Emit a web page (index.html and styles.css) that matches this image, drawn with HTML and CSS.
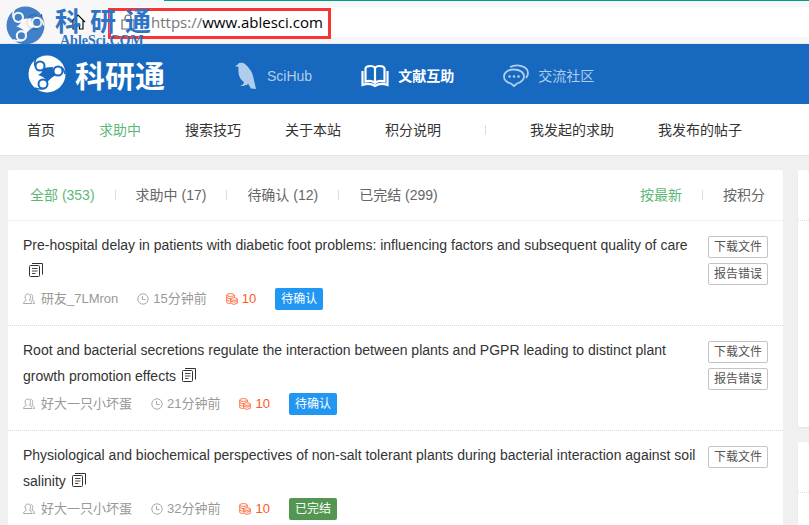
FILE: index.html
```html
<!DOCTYPE html>
<html lang="zh-CN">
<head>
<meta charset="utf-8">
<title>科研通 - 文献互助</title>
<link rel="stylesheet" href="styles.css">
</head>
<body>
<svg class="defs" aria-hidden="true">
  <symbol id="logo" viewBox="0 0 38 38">
    <circle cx="19" cy="19" r="18.500" fill="currentColor"/>
    <g fill="var(--gap)">
      <path d="M15 13Q21 12 25 12Q24 17 28 20Q22 23 19 28Q18 22 10 20Q15 18 15 13Z"/>
      <circle cx="12" cy="11" r="5.500"/><circle cx="30" cy="16" r="5.500"/><circle cx="15" cy="29" r="5.500"/>
    </g>
    <g fill="none" stroke="var(--gap)" stroke-width="1.600">
      <path d="M7 11Q6 6 9 2"/>
      <path d="M33 12Q36 14 37 19"/>
      <path d="M17 33Q12 35 7 33"/>
    </g>
    <g fill="currentColor">
      <circle cx="12" cy="11" r="3.500"/><circle cx="30" cy="16" r="3.500"/><circle cx="15" cy="29" r="3.500"/>
    </g>
  </symbol>
  <symbol id="doc" viewBox="0 0 14 14">
    <path d="M3 .5H13.500V11.500" fill="none" stroke="currentColor"/>
    <rect x=".5" y="2.500" width="10" height="11" rx="1" fill="none" stroke="currentColor"/>
    <path d="M3 5.500H8.500M3 8H8.500M3 10.500H6.500" stroke="currentColor" stroke-width=".9"/>
  </symbol>
  <symbol id="user" viewBox="0 0 12 12">
    <path d="M.5 10.500C.7 8.500 2 8 3.300 7.300C1.200 4.500 2 1 4.800 1S8.400 4.500 6.300 7.300C8 8 9 8.500 9 10.500ZM7.500 1.200C10 1.500 10.500 4.500 8.800 7C10.500 7.500 11.500 8.500 11.500 10.500H10" fill="none" stroke="currentColor"/>
  </symbol>
  <symbol id="clock" viewBox="0 0 12 12">
    <circle cx="6" cy="6" r="5.200" fill="none" stroke="currentColor"/>
    <path d="M5.500 3V6.500H8.500" fill="none" stroke="currentColor"/>
  </symbol>
  <symbol id="coin" viewBox="0 0 12 12">
    <g fill="none" stroke="currentColor" stroke-width=".8">
      <ellipse cx="4.500" cy="2" rx="3.800" ry="1.400"/>
      <path d="M.7 2V9.500Q2 10.500 4 10.500M.7 4.500Q3 6 5 5.500M.7 7Q2.500 8.200 4.500 8M8.300 2V4"/>
      <ellipse cx="8" cy="6" rx="3.300" ry="1.300"/>
      <path d="M4.700 6V10.300Q8 12.500 11.300 10.300V6M4.700 8.200Q8 10.200 11.300 8.200"/>
    </g>
  </symbol>
</svg>

<div class="browser">
  <div class="tabline"></div>
  <svg class="tool" viewBox="0 0 18 18" aria-hidden="true"><path d="M12 2.500A7.300 7.300 0 1 0 16.300 8M11.500 6.500H16.500V1.500" fill="none" stroke="#111" stroke-width="1.200"/></svg>
  <svg class="tool" viewBox="0 0 18 18" aria-hidden="true"><path d="M2 9L9 2L16 9M4 7.500V16H7.500V11H10.500V16H14V7.500" fill="none" stroke="#111" stroke-width="1.200"/></svg>
  <div class="address">
    <svg class="lock" viewBox="0 0 14 16" aria-hidden="true"><path d="M1 6H13V15H1ZM4 6V4A3 3 0 0 1 10 4V6" fill="none" stroke="#666" stroke-width="1.200"/></svg>
    <div class="url"><span>https://</span>www.ablesci.com</div>
  </div>
  <div class="redbox"></div>
  <div class="watermark">
    <svg class="mark" aria-hidden="true"><use href="#logo"/></svg>
    <div class="words"><div class="zh"><span>科</span><span>研</span><span>通</span></div><div class="en">AbleSci.COM</div></div>
  </div>
</div>

<header class="header">
  <a class="brand" href="#"><svg class="mark" aria-hidden="true"><use href="#logo"/></svg><span>科研通</span></a>
  <nav class="sections">
    <a href="#"><svg width="24" height="28" viewBox="0 0 24 28" aria-hidden="true"><path d="M1 4Q4 3 5 1Q9 0 11 2C15 6 18 9 19 14L22 27L17 26.500L14 21.500L13 23H10L11 24H6L9 22.500L10 20C5 17 4 11 4.500 5Z" fill="currentColor"/></svg><span>SciHub</span></a>
    <a class="active" href="#"><svg width="28" height="24" viewBox="0 0 28 24" aria-hidden="true"><path d="M14 4Q13 2 9.500 2Q5 2 4.500 4.500V17.500Q11 15.500 14 19Q17 15.500 23.500 17.500V4.500Q23 2 18.500 2Q15 2 14 4V18M1.500 7V21Q9 18.500 14 22Q19 18.500 26.500 21V7" fill="none" stroke="currentColor" stroke-width="2.200"/></svg><span>文献互助</span></a>
    <a href="#"><svg width="26" height="24" viewBox="0 0 26 24" aria-hidden="true"><path d="M11 22L8 19.500C4 18.500 1 16 1 12.500C1 8.500 5 5.500 11 5.500S21 8.500 21 12.500S17 18.500 14 19.500ZM7 3C14-.5 25 2 25 9Q25 11.500 23 14" fill="none" stroke="currentColor" stroke-width="1.800"/><g fill="currentColor"><circle cx="6.500" cy="12.500" r="1.300"/><circle cx="11" cy="12.500" r="1.300"/><circle cx="15.500" cy="12.500" r="1.300"/></g></svg><span>交流社区</span></a>
  </nav>
</header>

<nav class="menu">
  <a href="#">首页</a><a class="on" href="#">求助中</a><a href="#">搜索技巧</a><a href="#">关于本站</a><a href="#">积分说明</a><i class="sep"></i><a href="#">我发起的求助</a><a href="#">我发布的帖子</a>
</nav>

<div class="page">
  <main class="card">
    <div class="filters">
      <a class="on" href="#">全部 (353)</a><i class="sep"></i><a href="#">求助中 (17)</a><i class="sep"></i><a href="#">待确认 (12)</a><i class="sep"></i><a href="#">已完结 (299)</a>
      <span class="grow"></span>
      <a class="on" href="#">按最新</a><i class="sep"></i><a href="#">按积分</a>
    </div>
    <article class="item">
      <div class="info">
        <h2><a href="#">Pre-hospital delay in patients with diabetic foot problems: influencing factors and subsequent quality of care<svg class="doc" aria-hidden="true"><use href="#doc"/></svg></a></h2>
        <div class="meta">
          <span class="who"><svg aria-hidden="true"><use href="#user"/></svg>研友_7LMron</span>
          <span><svg aria-hidden="true"><use href="#clock"/></svg>15分钟前</span>
          <span class="coin"><svg aria-hidden="true"><use href="#coin"/></svg>10</span>
          <span class="badge">待确认</span>
        </div>
      </div>
      <div class="actions"><button type="button">下载文件</button><button type="button">报告错误</button></div>
    </article>
    <article class="item">
      <div class="info">
        <h2><a href="#">Root and bacterial secretions regulate the interaction between plants and PGPR leading to distinct plant growth promotion effects<svg class="doc" aria-hidden="true"><use href="#doc"/></svg></a></h2>
        <div class="meta">
          <span class="who"><svg aria-hidden="true"><use href="#user"/></svg>好大一只小坏蛋</span>
          <span><svg aria-hidden="true"><use href="#clock"/></svg>21分钟前</span>
          <span class="coin"><svg aria-hidden="true"><use href="#coin"/></svg>10</span>
          <span class="badge">待确认</span>
        </div>
      </div>
      <div class="actions"><button type="button">下载文件</button><button type="button">报告错误</button></div>
    </article>
    <article class="item">
      <div class="info">
        <h2><a href="#">Physiological and biochemical perspectives of non-salt tolerant plants during bacterial interaction against soil salinity<svg class="doc" aria-hidden="true"><use href="#doc"/></svg></a></h2>
        <div class="meta">
          <span class="who"><svg aria-hidden="true"><use href="#user"/></svg>好大一只小坏蛋</span>
          <span><svg aria-hidden="true"><use href="#clock"/></svg>32分钟前</span>
          <span class="coin"><svg aria-hidden="true"><use href="#coin"/></svg>10</span>
          <span class="badge done">已完结</span>
        </div>
      </div>
      <div class="actions"><button type="button">下载文件</button></div>
    </article>
  </main>
  <aside class="side">
    <section class="card panel"><div class="head"></div></section>
    <section class="card panel"><div class="head"></div></section>
  </aside>
</div>
</body>
</html>
```
FILE: styles.css
```css
* { box-sizing: border-box; }
html { height: 100%; overflow: hidden; }
body {
  margin: 0;
  height: 100%;
  overflow: hidden;
  background: #f0f0f0;
  color: #333;
  font: 14px/26px "Liberation Sans", "Noto Sans CJK SC", sans-serif;
}
a { color: inherit; text-decoration: none; }
svg { display: block; flex: none; }
.defs { position: absolute; width: 0; height: 0; }

.browser {
  position: relative;
  display: flex;
  align-items: center;
  height: 44px;
  padding-left: 25px;
  gap: 26px;
  background: #f7f7f7;
  border-bottom: 1px solid #e4e8ee;
}
.tabline { position: absolute; top: 0; left: 164px; right: 0; height: 1px; background: #009f8c; }
.tool { width: 18px; height: 18px; }
.address {
  flex: 1;
  display: flex;
  align-items: center;
  gap: 16px;
  height: 30px;
  padding-left: 8px;
  background: #fff;
}
.lock { width: 14px; height: 16px; }
.url { font: 15px/20px "Open Sans", sans-serif; color: #000; }
.url span { color: #767676; }
.redbox { position: absolute; left: 108px; top: 8px; width: 223px; height: 31px; border: 3px solid #f83434; }
.watermark {
  position: absolute;
  left: 6px;
  top: 6px;
  display: flex;
  gap: 10px;
  color: #2f74c4;
  --gap: #f7f7f7;
}
.watermark .mark { width: 39px; height: 39px; opacity: .9; }
.zh { display: flex; gap: 9px; font: bold 26px/28px "Noto Sans CJK SC", sans-serif; }
.en { padding-left: 5px; font: bold 14px/14px "Liberation Serif", serif; }

.header {
  display: flex;
  align-items: center;
  height: 60px;
  padding-left: 28px;
  background: #1769c0;
  color: #fff;
}
.brand { display: flex; align-items: center; gap: 9px; --gap: #1769c0; font: bold 30px/40px "Noto Sans CJK SC", sans-serif; }
.brand .mark { width: 38px; height: 38px; }
.sections { display: flex; gap: 49px; margin-left: 69px; padding-top: 4px; }
.sections a { display: flex; align-items: center; gap: 9px; height: 28px; color: #b0cdeb; }
.sections .active { color: #fff; font-weight: bold; }

.menu {
  display: flex;
  align-items: center;
  gap: 44px;
  height: 52px;
  padding-left: 27px;
  background: #fff;
  border-bottom: 1px solid #e6e6e6;
}
.sep { width: 1px; height: 10px; background: #ddd; }
.on { color: #5fb878; }

.page { display: grid; grid-template-columns: minmax(0, 1fr) 11px; gap: 15px; padding: 14px 0 0 8px; }
.card { background: #fff; border-radius: 2px; }
.filters {
  display: flex;
  align-items: center;
  gap: 20px;
  height: 51px;
  padding: 0 18px 0 22px;
  border-bottom: 1px solid #f0f0f0;
  color: #666;
}
.filters .on { color: #5fb878; }
.grow { flex: 1; }
.item {
  display: flex;
  gap: 12px;
  padding: 11px 15px 12px;
  border-bottom: 1px dotted #d8d8d8;
}
.info { flex: 1; min-width: 0; }
h2 { margin: 0; font: inherit; }
.doc { display: inline-block; width: 14px; height: 14px; margin-left: 6px; vertical-align: -1px; }
.meta { display: flex; align-items: center; gap: 19px; height: 28px; margin-top: 1px; font-size: 13px; color: #999; }
.meta span { display: flex; align-items: center; gap: 4px; }
.meta svg { width: 12px; height: 12px; color: #aaa; }
.meta .who { gap: 6px; }
.meta .coin, .meta .coin svg { color: #ff5722; }
.meta .badge { padding: 0 6px; border-radius: 2px; background: #2196f3; color: #fff; font-size: 12px; line-height: 22px; }
.meta .done { background: #529652; }
.actions { display: flex; flex-direction: column; gap: 5px; padding-top: 4px; }
.actions button {
  height: 22px;
  padding: 0 5px;
  border: 1px solid #c4c4c4;
  border-radius: 2px;
  background: #fff;
  color: #555;
  font: 12px/20px "Liberation Sans", "Noto Sans CJK SC", sans-serif;
}
.side { display: flex; flex-direction: column; gap: 15px; }
.panel { height: 257px; box-shadow: 0 1px 2px #0001; }
.head { height: 51px; border-bottom: 1px dotted #ddd; }
```
